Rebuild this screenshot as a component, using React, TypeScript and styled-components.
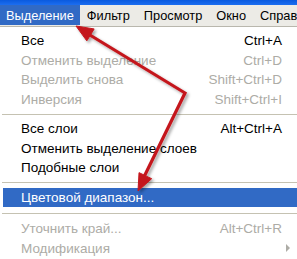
import React from 'react';
import styled, { createGlobalStyle } from 'styled-components';

const GlobalStyle = createGlobalStyle`
  html, body {
    margin: 0;
    padding: 0;
    background: #fff;
    overflow: hidden;
  }
  body {
    font-family: "Liberation Sans", Arial, sans-serif;
    font-size: 13.5px;
  }
`;

const Page = styled.div`
  position: relative;
  width: 297px;
  height: 259px;
  overflow: hidden;
  background: #fff;
`;

const TitleStrip = styled.div`
  height: 5px;
  background: linear-gradient(#0a5adf, #1c6ef0);
`;

const MenuBar = styled.div`
  display: flex;
  height: 21px;
  background: #ecebe6;
  border-bottom: 1px solid #b9b7ad;
  white-space: nowrap;
  font-size: 12.8px;
`;

const MenuTitle = styled.div<{ $active?: boolean }>`
  display: flex;
  align-items: center;
  padding: 0 7px;
  margin-bottom: 1px;
  color: ${p => (p.$active ? '#fff' : '#000')};
  background: ${p => (p.$active ? '#316ac5' : 'transparent')};
  &:first-child {
    padding-left: 6px;
    padding-right: 6px;
  }
`;

const Dropdown = styled.div`
  display: flex;
  flex-direction: column;
  padding-top: 4px;
`;

const Row = styled.div<{ $disabled?: boolean; $selected?: boolean }>`
  display: flex;
  align-items: center;
  justify-content: space-between;
  height: 19.5px;
  padding: 0 15px 0 18px;
  margin-left: 3px;
  color: ${p => (p.$selected ? '#fff' : p.$disabled ? '#adaca6' : '#000')};
  background: ${p => (p.$selected ? '#316ac5' : 'transparent')};
`;

const Shortcut = styled.span`
  text-align: right;
`;

const Separator = styled.div<{ $h?: number }>`
  display: flex;
  align-items: center;
  height: ${p => p.$h ?? 10}px;
  padding-left: 2px;
  &::after {
    content: '';
    flex: 1;
    height: 1px;
    background: #c5c2b2;
  }
`;

const SubArrow = styled.span`
  width: 0;
  height: 0;
  margin-right: -8px;
  border-top: 4px solid transparent;
  border-bottom: 4px solid transparent;
  border-left: 4px solid #adaca6;
`;

const Overlay = styled.svg`
  position: absolute;
  left: 0;
  top: 0;
  pointer-events: none;
`;

type Item = { label: string; shortcut?: string; disabled?: boolean; sub?: boolean };

const groupA: Item[] = [
  { label: 'Все', shortcut: 'Ctrl+A' },
  { label: 'Отменить выделение', shortcut: 'Ctrl+D', disabled: true },
  { label: 'Выделить снова', shortcut: 'Shift+Ctrl+D', disabled: true },
  { label: 'Инверсия', shortcut: 'Shift+Ctrl+I', disabled: true },
];

const groupB: Item[] = [
  { label: 'Все слои', shortcut: 'Alt+Ctrl+A' },
  { label: 'Отменить выделение слоев' },
  { label: 'Подобные слои' },
];

const groupC: Item[] = [
  { label: 'Уточнить край...', shortcut: 'Alt+Ctrl+R', disabled: true },
  { label: 'Модификация', disabled: true, sub: true },
];

const renderRow = (it: Item) => (
  <Row key={it.label} $disabled={it.disabled}>
    <span>{it.label}</span>
    {it.sub ? <SubArrow /> : <Shortcut>{it.shortcut}</Shortcut>}
  </Row>
);

function Arrows() {
  const head = (tx: number, ty: number, fx: number, fy: number) => {
    const dx = tx - fx;
    const dy = ty - fy;
    const len = Math.hypot(dx, dy);
    const ux = dx / len;
    const uy = dy / len;
    const bx = tx - ux * 17;
    const by = ty - uy * 17;
    const w = 7;
    return `${tx},${ty} ${bx - uy * w},${by + ux * w} ${bx + uy * w},${by - ux * w}`;
  };
  const corner = { x: 185, y: 93 };
  const t1 = { x: 76, y: 26 };
  const t2 = { x: 138, y: 191 };
  return (
    <Overlay width="297" height="259" viewBox="0 0 297 259">
      <defs>
        <filter id="sh" x="-20%" y="-20%" width="140%" height="140%">
          <feDropShadow dx="2" dy="2" stdDeviation="1.5" floodColor="#000" floodOpacity="0.35" />
        </filter>
      </defs>
      <g filter="url(#sh)" fill="#c4161c" stroke="#c4161c">
        <polyline
          points={`${t1.x + 9},${t1.y + 6} ${corner.x},${corner.y} ${t2.x + 4},${t2.y - 10}`}
          fill="none"
          strokeWidth="3.2"
          strokeLinejoin="miter"
        />
        <polygon points={head(t1.x, t1.y, corner.x, corner.y)} strokeWidth="1" />
        <polygon points={head(t2.x, t2.y, corner.x, corner.y)} strokeWidth="1" />
      </g>
    </Overlay>
  );
}

export default function App() {
  return (
    <Page>
      <GlobalStyle />
      <TitleStrip />
      <MenuBar>
        <MenuTitle $active>Выделение</MenuTitle>
        <MenuTitle>Фильтр</MenuTitle>
        <MenuTitle>Просмотр</MenuTitle>
        <MenuTitle>Окно</MenuTitle>
        <MenuTitle>Справка</MenuTitle>
      </MenuBar>
      <Dropdown>
        {groupA.map(renderRow)}
        <Separator />
        {groupB.map(renderRow)}
        <Separator />
        <Row $selected>
          <span>Цветовой диапазон...</span>
        </Row>
        <Separator $h={12} />
        {groupC.map(renderRow)}
      </Dropdown>
      <Arrows />
    </Page>
  );
}
